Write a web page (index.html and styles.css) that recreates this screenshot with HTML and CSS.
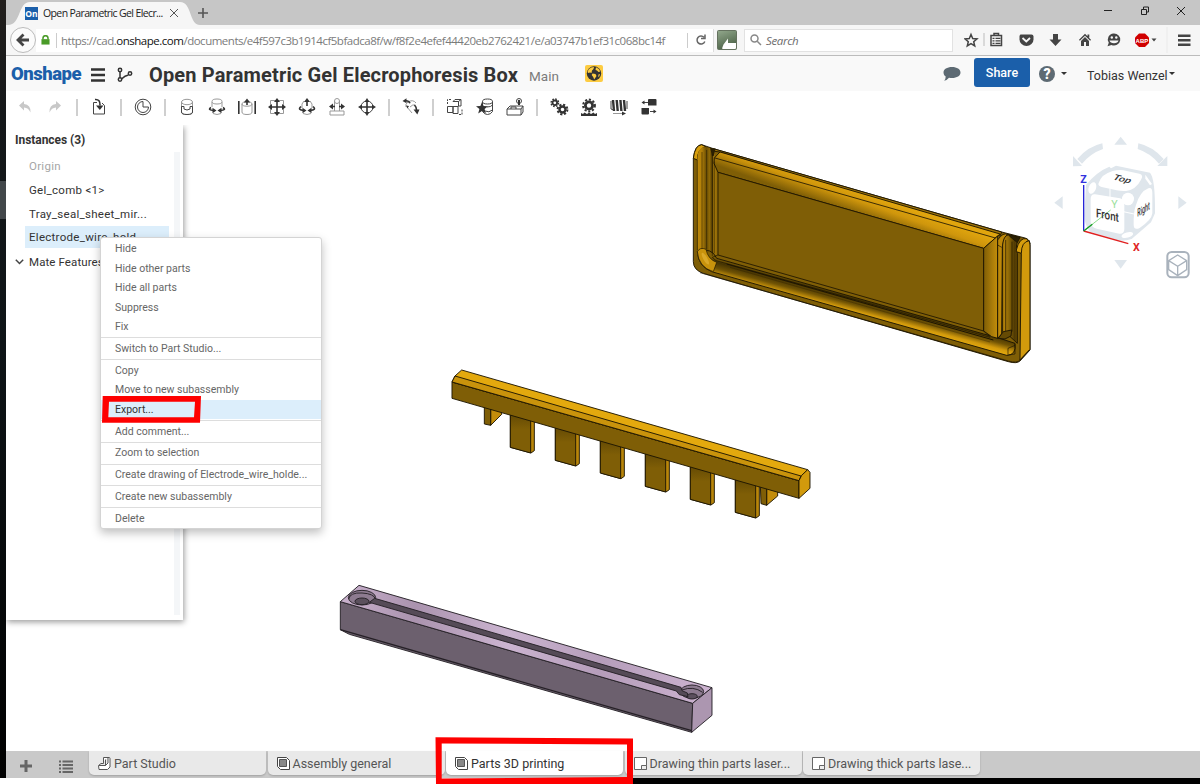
FILE: index.html
```html
<!DOCTYPE html>
<html lang="en">
<head>
<meta charset="utf-8">
<title>Open Parametric Gel Elecrophoresis Box</title>
<link rel="stylesheet" href="styles.css">
</head>
<body>
<div class="desktop">
<div class="wallpaper"><i></i></div>
<div class="window">
  <header class="titlebar">
    <div class="tab">
      <svg class="tab-shape" viewBox="0 0 192 25"><path d="M0 25C13 25 10 2 22 2H172C184 2 181 25 192 25Z" fill="#f6f6f6"/></svg>
      <span class="favicon">On</span><span class="tab-title">Open Parametric Gel Elecr...</span>
      <svg class="tab-close" viewBox="0 0 10 10"><path d="M1 1l8 8M9 1l-8 8" stroke="#555" fill="none"/></svg>
    </div>
    <svg class="new-tab" viewBox="0 0 10 10"><path d="M5 0v10M0 5h10" stroke="#555" stroke-width="1.600"/></svg>
    <svg class="win-buttons" viewBox="0 0 88 12"><g fill="none" stroke="#222"><path d="M4 5.500h8M77 2l8 8M85 2l-8 8" /><path d="M41.500 4.500h5v5h-5zM43.500 4v-2h5v5h-2"/></g></svg>
  </header>
  <div class="navbar">
    <div class="back"><svg viewBox="0 0 14 14"><path d="M7.500 1.500L2 7l5.500 5.500M2 7h11" fill="none" stroke="#444" stroke-width="2.800"/></svg></div>
    <div class="url">
      <svg class="lock" viewBox="0 0 10 12"><path d="M2.200 5V3.500a2.800 2.800 0 0 1 5.600 0V5" fill="none" stroke="#4a9b28" stroke-width="1.700"/><path d="M.5 4.500h9v6h-9z" fill="#4a9b28"/></svg>
      <i class="vline"></i>
      <span class="address">https://cad.<b>onshape.com</b>/documents/e4f597c3b1914cf5bfadca8f/w/f8f2e4efef44420eb2762421/e/a03747b1ef31c068bc14f</span>
      <i class="vline"></i>
      <svg class="reload" viewBox="0 0 12 12"><path d="M9 3.300A4 4 0 1 0 9.800 7.500M6 4.500h4v-4" fill="none" stroke="#666" stroke-width="1.500"/></svg>
    </div>
    <svg class="ext" viewBox="0 0 20 20"><defs><linearGradient id="eg" x2=".4" y2="1"><stop stop-color="#93a98d"/><stop offset="1" stop-color="#4e6449"/></linearGradient></defs><rect x=".5" y=".5" width="19" height="19" rx="1" fill="url(#eg)" stroke="#65725f"/><path d="M5 18.500L6.500 14.500 11 8.500V13h8v5a1 1 0 0 1-1 1H6z" fill="#fff"/></svg>
    <div class="search"><svg viewBox="0 0 12 12"><circle cx="4.500" cy="4.500" r="3.500"/><path d="M7.200 7.200L11 11"/></svg><span>Search</span></div>
    <svg class="nav-icons" viewBox="0 0 232 26"><g fill="#444" stroke="none">
      <path d="M7 7.500l1.700 4 4.300.4-3.300 2.800 1 4.200L7 16.600l-3.700 2.300 1-4.200L1 11.900l4.300-.4z" fill="none" stroke="#444" stroke-width="1.500"/>
      <path d="M19.500 6h1v13h-1z" fill="#bbb"/>
      <path d="M27 8.500h10.500v10H27zM30 6.500h4.500v2H30z" fill="none" stroke="#444" stroke-width="1.500"/><path d="M28.500 10.700h2v1.300h-2zm3 0h5v1.300h-5zm-3 2.500h2v1.300h-2zm3 0h5v1.300h-5zm-3 2.500h2V17h-2zm3 0h5V17h-5z"/>
      <path d="M56.500 7.500h11q2 0 2 2v3a7 6.500 0 0 1-14 0v-3q0-1.500 1-2z" /><path d="M58.500 11l3.800 3.500L66 11" fill="none" stroke="#f6f6f6" stroke-width="1.800"/>
      <path d="M89 7h5v5.500h3.500L91.500 19 85.500 12.500H89z"/>
      <path d="M115 12.800l6-6 6 6-.8 1-5.200-5-5.200 5zM117 14l4-4 4 4v5h-3v-4h-2v4h-3zM123.500 7.500h1.800v3h-1.800z"/>
      <path d="M149.500 6.500a6.300 6 0 1 1-2 11.500l-4 1.300 1.300-3.500a6 6 0 0 1 4.700-9.300"/><g fill="#f6f6f6"><circle cx="147.800" cy="10.500" r="1.200"/><circle cx="152.300" cy="10.500" r="1.200"/><path d="M145.500 13.500h9a4.600 3.500 0 0 1-9 0"/></g>
      <path d="M175 6.500h6l4 4v5.500l-4 4h-6l-4-4v-5.500z" fill="#d00000"/><text x="171.600" y="15.500" fill="#fff" class="abp">ABP</text><path d="M187.500 11.500h5l-2.500 3z"/><path d="M202.500 0h1v26h-1z" fill="#e9e9e9"/>
      <path d="M214 7.500h12.500V10H214zm0 4.500h12.500v2.500H214zm0 4.500h12.500V19H214z"/>
    </g></svg>
  </div>
  <div class="docbar">
    <span class="logo">Onshape</span>
    <svg class="burger" viewBox="0 0 14 14"><path d="M0 1.500h14M0 7h14M0 12.500h14" stroke="#333" stroke-width="2.400"/></svg>
    <svg class="branch" viewBox="0 0 16 16"><g fill="none" stroke="#333" stroke-width="1.500"><circle cx="3" cy="3" r="1.700"/><circle cx="3" cy="12.500" r="1.700"/><circle cx="13" cy="6.500" r="1.700"/><path d="M3 4.500v6.500M4.500 12Q8 8.500 11.500 8"/></g></svg>
    <h1>Open Parametric Gel Elecrophoresis Box</h1><span class="ws">Main</span>
    <svg class="globe" viewBox="0 0 18 17"><rect width="18" height="17" rx="2" fill="#fdcc42"/><circle cx="9" cy="8.500" r="7.200" fill="#333"/><path d="M4 4Q6 2 9 2L8.500 4 7 5.500 6.500 8 5 7.500 3 8 2.600 6.500zM11 2.300Q14.500 3.500 15.300 6.500L13.500 7 12 5.500 10.500 5zM7.500 8.500l3 .5 1 2-2.300 3.500-1-2.500-1.500-2zM13.500 9.500l1.500-.5-.8 2.500-1 .5z" fill="#fdcc42"/></svg>
    <svg class="bubble" viewBox="0 0 18 16"><path d="M9 1c5 0 8.500 2.300 8.500 5.500S14 12 9 12q-1.600 0-3-.3Q4 14.300 1.200 14.700 2.700 13 2.700 10.500C1.200 9.500.5 8 .5 6.500.5 3.300 4 1 9 1" fill="#5d6a73"/></svg>
    <button class="share">Share</button>
    <span class="help">?</span><i class="caret"></i>
    <span class="user">Tobias Wenzel</span><i class="caret"></i>
  </div>
  <div class="toolbar">
    <svg viewBox="0 0 18 18"><path d="M3 7.500L8 3v3q7 .5 6.500 8.500Q12.500 9.700 8 9.500v3z" fill="#c8c8c8"/></svg>
    <svg viewBox="0 0 18 18"><path d="M15 7.500L10 3v3q-7 .5-6.500 8.500Q5.500 9.700 10 9.500v3z" fill="#c8c8c8"/></svg>
    <i></i>
    <svg viewBox="0 0 18 18"><path d="M7 4.500H3.500v11.500h11V7.500L12 5" class="l"/><path d="M5 1.500q5.500-.5 5 6" class="b"/><path d="M6 7.500h7.500L9.800 12z"/></svg>
    <i></i>
    <svg viewBox="0 0 18 18"><circle cx="9" cy="9" r="7.800" class="l"/><path d="M9 3.500V9h5.500A5.500 5.500 0 1 1 9 3.500" class="l"/></svg>
    <i></i>
    <svg viewBox="0 0 18 18"><ellipse cx="9" cy="4" rx="5.500" ry="2.700" class="g"/><path d="M3.500 4v10q0 2.500 5.500 2.500t5.500-2.500V4" class="g"/><path d="M3.500 8.500H6v2.500q3 2 6 0V8.500h2.500V14q0 2.500-5.500 2.500T3.500 14z" class="l"/></svg>
    <svg viewBox="0 0 18 18"><ellipse cx="9" cy="3.500" rx="5" ry="2.500" class="g"/><path d="M4 4v5M14 4v5M5 15.500q4 2 8 0" class="g"/><path d="M3 9.500q-4 2.500 3 3M15 9.500q4 2.500-3 3" class="b"/><path d="M4.500 9.800l4 2.700-4 2.700zM13.500 9.800l-4 2.700 4 2.700z"/></svg>
    <svg viewBox="0 0 18 18"><path d="M4 6v8q0 2.500 5 2.500t5-2.500V6" class="g"/><ellipse cx="9" cy="6" rx="5" ry="2.200" class="g"/><path d="M.8 3v13M17.200 3v13M9 2v5" class="b"/><path d="M5.800 4.500L9 .5l3.200 4z"/></svg>
    <svg viewBox="0 0 18 18"><path d="M2.500 2.500h13v13h-13z" class="g"/><path d="M9 2v14M2 9h14" class="b"/><path d="M9 0l3 4H6zM9 18l3-4H6zM0 9l4-3v6zM18 9l-4-3v6z"/></svg>
    <svg viewBox="0 0 18 18"><path d="M4 10V6l2-3M14 10V6l-2-3M5 15.500q4 2 8 0" class="g"/><path d="M9 2v6M3 8.500q-4 3.500 3 4M15 8.500q4 3.500-3 4" class="b"/><path d="M6 4l3-4 3 4zM4.500 9.800l4 2.700-4 2.700zM13.500 9.800l-4 2.700 4 2.700z"/></svg>
    <svg viewBox="0 0 18 18"><circle cx="9" cy="3" r="2.500" class="g"/><path d="M6.500 3v10M11.500 3v10M2 13h14v4H2z" class="g"/><path d="M3 8.500h4M11 8.500h4" class="b"/><path d="M1 8.500l4-3v6zM17 8.500l-4-3v6z"/></svg>
    <svg viewBox="0 0 18 18"><circle cx="9" cy="9" r="6" class="l"/><path d="M9 2v14M2 9h14" class="b"/><path d="M9 0l2.500 4h-5zM9 18l2.500-4h-5zM0 9l4-2.500v5zM18 9l-4-2.500v5z"/></svg>
    <i></i>
    <svg viewBox="0 0 18 18"><path d="M4 9q-1-3 2-5 5-3 8 1M5 9l5 6M8 9q3-3 5-2" class="g"/><path d="M4 2.800q3 0 4 2.500M12.500 7q2 2 2 5" class="b"/><path d="M.5 3l4-2.800v5zM11.500 11.500h6l-2.200 5zM4 7.500l3 .5-1.500 2.500z"/></svg>
    <i></i>
    <svg viewBox="0 0 18 18"><path d="M1.500 8.500h5.500v6H1.500zM7 8.500h5v7H7zM7 3.500h5.500v5M12.500 3.500V8H15V1.500H9L7 3.500M12.500 3.500L15 1.500" class="l"/><path d="M1.500 6V1.500H6M13 16.500h3V11" class="l" stroke-dasharray="2 1"/></svg>
    <svg viewBox="0 0 18 18"><ellipse cx="11.500" cy="3.500" rx="5" ry="2.500" class="l"/><path d="M6.500 3.500v10q2 3 5 3t5-3v-10M11 9q4 0 5.500-2M9 13q4 2 7.500-1" class="l"/><path d="M6 4l1.600 4 4.400.3-3.400 2.800L9.800 15.500 6 13l-3.800 2.500 1.200-4.400L0 8.300 4.400 8z"/></svg>
    <svg viewBox="0 0 18 18"><path d="M1 11l3-3h13v6l-2 3H1zM1 11h14v6M15 11l2-3M5 11v-2h5v2" class="l"/><circle cx="13" cy="3" r="2.500" class="l"/><path d="M12 2h2v5h-2z"/></svg>
    <i></i>
    <svg viewBox="0 0 18 18"><circle cx="4.800" cy="4.800" r="2.300" fill="none" stroke="#333" stroke-width="1.800"/><circle cx="4.800" cy="4.800" r="3.700" class="teeth small"/><circle cx="12.500" cy="11.500" r="3" fill="none" stroke="#333" stroke-width="2.400"/><circle cx="12.500" cy="11.500" r="4.900" class="teeth"/></svg>
    <svg viewBox="0 0 18 18"><circle cx="9" cy="7.500" r="3.600" fill="none" stroke="#333" stroke-width="2.800"/><circle cx="9" cy="7.500" r="5.900" class="teeth"/><path d="M1 18v-3l2 1 1.500-1.500L7 16l2-1.500 2 1.500 2.500-1.500L15 16l2-1v3z"/></svg>
    <svg viewBox="0 0 18 18"><path d="M3 2l1 11M6.700 2l1 11M10.400 2l1 11M14 2l1 11" stroke="#333" stroke-width="2.400"/><path d="M1 3v8q2 2 4-1M17 3v8" class="l"/><path d="M3 15.500h11" class="g"/><path d="M12 13.500l4 2-4 2z"/></svg>
    <svg viewBox="0 0 18 18"><path d="M8 2q0-1 1-1h6.500q1 0 1 1v5.500H8zM1.500 10H9v5.500q0 1-1 1H2.500q-1 0-1-1z"/><path d="M8 4.500H3M10 13.500h5" class="l"/><path d="M1.500 4.500l3-2v4zM16.500 13.500l-3-2v4z"/></svg>
  </div>
  <main class="workspace">
    <svg class="scene" viewBox="6 125 1194 626">
      <defs>
        <linearGradient id="bev" gradientUnits="userSpaceOnUse" x1="540" y1="185" x2="517" y2="250"><stop stop-color="#e0a50e"/><stop offset=".4" stop-color="#cf960c"/><stop offset="1" stop-color="#7f5e06"/></linearGradient>
        <linearGradient id="chl" gradientUnits="userSpaceOnUse" x1="50" y1="0" x2="114" y2="0"><stop stop-color="#c08b0b"/><stop offset=".25" stop-color="#b07f09"/><stop offset=".45" stop-color="#6a4e04"/><stop offset=".6" stop-color="#8d6807"/><stop offset=".75" stop-color="#4d3803"/><stop offset=".8" stop-color="#a87a09"/><stop offset="1" stop-color="#8a6607"/></linearGradient>
        <linearGradient id="chb" gradientUnits="userSpaceOnUse" x1="540" y1="498" x2="525" y2="555"><stop stop-color="#7f5e06"/><stop offset=".2" stop-color="#453302"/><stop offset=".5" stop-color="#705304"/><stop offset=".8" stop-color="#d29a0c"/><stop offset="1" stop-color="#e3a90e"/></linearGradient>
        <linearGradient id="pil"><stop stop-color="#7f5e06"/><stop offset=".6" stop-color="#a97b09"/><stop offset="1" stop-color="#c48e0b"/></linearGradient>
        <linearGradient id="chr"><stop stop-color="#c08b0b"/><stop offset=".35" stop-color="#8d6807"/><stop offset=".7" stop-color="#4d3803"/><stop offset="1" stop-color="#8d6807"/></linearGradient>
        <linearGradient id="lil"><stop stop-color="#c9b1cd"/><stop offset=".2" stop-color="#aa93ae"/><stop offset=".45" stop-color="#cbb4d0"/><stop offset=".7" stop-color="#b59dba"/><stop offset="1" stop-color="#cdb4d1"/></linearGradient>
        <linearGradient id="leg" x2="0" y2="1"><stop stop-color="#634904"/><stop offset=".4" stop-color="#7f5e06"/></linearGradient>
      </defs>
      <g transform="translate(680 130) scale(.33333)" class="solid">
        <path d="M40 85Q45 45 65 44L100 56 965 306 1035 324Q1050 328 1050 345V660L1020 693Q1010 702 985 695L70 430Q40 420 40 395Z" fill="#7f5e06"/>
        <path d="M40 85Q45 45 65 44L78 51Q52 55 52 90Z" fill="#d79e0d"/>
        <path d="M52 90Q52 50 78 51L105 58 102 100 114 127V375L96 378 54 360Z" fill="url(#chl)" stroke="none"/>
        <path d="M52 365Q95 350 110 385L911 612 950 622 1005 640Q1010 675 980 676L95 425Q55 410 52 365Z" fill="url(#chb)"/>
        <path d="M52 365Q60 350 78 358 84 388 110 397L100 425Q56 412 52 365Z" fill="#c9930c" stroke-width="2"/>
        <ellipse cx="76" cy="386" rx="6" ry="20" fill="#eebf45" opacity=".5" stroke="none" transform="rotate(-30 76 386)"/>
        <path d="M100 56L965 306 960 318 120 66 104 64Z" fill="#a0760a"/>
        <path d="M120 66L960 312 911 355 114 127 102 100 103 84Z" fill="url(#bev)"/>
        <path d="M105 84L950 325" fill="none" stroke-width="2.500"/>
        <path d="M78 51L107 56 101 78 96 78 90 52Z" fill="#2a1f02" stroke="none"/>
        <path d="M52 90V360M66 66V356M80 60V358M97 72V378M103 95V370" fill="none" stroke-width="1.500"/>
        <path d="M114 127L911 355V603L114 375Z" fill="#7f5e06" stroke-width="2.500"/>
        <path d="M114 375L97 382 108 392 930 622 911 603" fill="none" stroke-width="2"/>
        <path d="M140 402L940 630" fill="none" stroke-width="3"/>
        <path d="M150 412L930 636" fill="none" stroke-width="1.500" opacity=".6"/>
        <path d="M911 355L953 318V625L935 620 911 603Z" fill="url(#pil)"/>
        <path d="M953 330Q970 305 983 314 968 330 967 350L965 612 953 625Z" fill="#bd880a"/>
        <path d="M968 345Q970 318 985 314L1020 322Q1003 340 1012 370V640L985 615 968 605Z" fill="url(#chr)"/>
        <path d="M985 314L1020 323 1012 338 990 320Z" stroke-width="2" fill="#2a1f02"/>
        <path d="M953 345L965 352M977 330V605M996 335V605" stroke-width="2" fill="none"/>
        <path d="M955 625L970 605 995 600 993 618 975 627Z" fill="#654a04"/>
        <path d="M1009 360Q1018 322 1040 326L1050 340 1024 370 1009 365Z" fill="#d79e0d"/>
        <path d="M1024 370Q1024 335 1048 332L1050 345V658L1020 690Z" fill="#d29a0c"/>
        <path d="M1005 642V672L980 676M984 672V655L1005 646M60 428L985 693Q1012 700 1020 690L1048 660" fill="none" stroke-width="2"/>
      </g>
      <g transform="translate(440 360) scale(.33333)" class="solid">
        <path d="M152 148H185V163L152 196Z" fill="#c28c0b"/><path d="M133 138H152V196L133 192Z" fill="#7f5e06"/>
        <path d="M980 385H1013V408L980 436Z" fill="#c28c0b"/><path d="M961 375H980V436L963 431Z" fill="#7f5e06"/>
        <g id="tooth"><path d="M211 160L283 182V272L273 279 211 262Z" fill="#b9860a"/><path d="M211 160L272 180V279L211 262Z" fill="url(#leg)"/></g>
        <use href="#tooth" x="135" y="39"/><use href="#tooth" x="270" y="77"/><use href="#tooth" x="405" y="117"/><use href="#tooth" x="540" y="156"/><use href="#tooth" x="675" y="195"/>
        <path d="M36 66L1077 362V415L36 115Z" fill="#7f5e06"/>
        <path d="M36 66L45 48 65 30 1103 329 1083 350 1077 362Z" fill="#e3a90e"/>
        <path d="M36 66L45 48 1083 348 1077 362Z" fill="#c9930c"/>
        <path d="M1077 362L1085 346 1103 329 1110 337V385L1077 415Z" fill="#d29a0c"/>
      </g>
      <g transform="translate(330 575) scale(.33333)" class="solid lilac">
        <path d="M31 80L1088 385 1085 472 58 178 31 164Z" fill="#6c606e"/>
        <path d="M31 80L87 31 1146 338 1088 385Z" fill="url(#lil)"/>
        <path d="M1088 385L1146 338V421L1085 472Z" fill="#ac96b0"/>
        <path d="M31 164L1085 467" fill="none" stroke-width="4"/>
        <ellipse cx="96" cy="68" rx="41" ry="22" fill="#8d7b90"/><path d="M56 72Q60 52 96 54T136 72" fill="none"/><ellipse cx="96" cy="79" rx="21" ry="10" fill="#5b505d"/>
        <ellipse cx="1086" cy="350" rx="35" ry="20" fill="#8d7b90"/><path d="M1056 345Q1090 332 1118 352" fill="none"/><ellipse cx="1086" cy="364" rx="16" ry="8" fill="#5b505d"/>
        <path d="M134 70L1053 337 1056 347 1072 354 1074 365 1048 359 1039 348 118 82Z" fill="#554b57"/>
      </g>
      <g transform="translate(1040 125) scale(.33333)">
        <g fill="#dfe6ec"><path d="M242 35l19 24h-38zM242 431l19-26h-38zM43 233l25-19v38zM440 233l-25-19v38zM99 93l27 30-27 1zM382 93v30h-30z"/>
        <path d="M187 55Q145 64 112 102l14 14Q152 85 189 72zM295 55Q337 64 371 102l-14 14Q330 84 293 72z"/>
        <path d="M228 122L330 143Q346 160 345 265L333 292 275 342Q250 350 230 345L150 320Q133 300 133 270L138 180Q170 140 208 125L213 130Z"/></g>
        <g fill="#fff"><path d="M176 174Q185 147 218 138 235 134 250 136L298 146Q312 150 303 164 288 194 258 198 245 199 230 196L185 186Q172 182 176 174"/><path d="M165 208L240 220Q253 222 253 240V312Q253 327 238 326L170 311Q152 307 152 290V222Q152 207 165 208"/><path d="M288 240Q300 200 325 190 337 185 337 205V265Q335 285 300 308 282 318 281 300 280 260 288 240"/><ellipse cx="264" cy="222" rx="18" ry="19"/><ellipse cx="157" cy="189" rx="11" ry="18" transform="rotate(20 157 189)"/><ellipse cx="262" cy="330" rx="18" ry="8" transform="rotate(-15 262 330)"/><path d="M316 149l20 28-6 4-14-20z"/></g>
        <path d="M210 190v32M250 260l32 7" stroke="#fff" stroke-width="3"/>
        <path d="M131 318V180" stroke="#2525d8" stroke-width="4"/><path d="M131 318L265 356" stroke="#e02020" stroke-width="4"/><path d="M131 318L212 255" stroke="#8edc8e" stroke-width="3"/><path d="M131 318L157 298" stroke="#139b22" stroke-width="4"/>
        <g class="cube-text"><text transform="translate(168 276) skewY(12) scale(.92 1.150)">Front</text><text transform="translate(292 276) skewY(-32) scale(.5 1.050)">Right</text><text transform="translate(216 163) rotate(13) skewX(-25) scale(1 .75)">Top</text></g>
        <g class="axis"><text x="121" y="173" fill="#3333e0">Z</text><text x="214" y="249" fill="#9ae09a" font-weight="normal">Y</text><text x="279" y="377" fill="#e02525">X</text></g>
        <g fill="none" stroke="#a9b2bc" stroke-width="4"><rect x="382" y="381" width="64" height="76" rx="13" stroke-width="6"/><path d="M413 390l27 17v27l-27 18-27-18v-27zM386 407l27 17 27-17M413 424v28"/></g>
      </g>
    </svg>
    <aside class="panel">
      <h2>Instances (3)</h2>
      <ul><li class="muted">Origin</li><li>Gel_comb &lt;1&gt;</li><li>Tray_seal_sheet_mir...</li><li class="sel">Electrode_wire_hold...</li></ul>
      <div class="mates"><svg viewBox="0 0 9 6"><path d="M.8.8l3.700 3.700L8.200.8" fill="none" stroke="#444" stroke-width="1.500"/></svg>Mate Features</div>
      <i class="scroll"></i>
    </aside>
    <ul class="menu">
      <li>Hide</li><li>Hide other parts</li><li>Hide all parts</li><li>Suppress</li><li>Fix</li><li class="sep"></li>
      <li>Switch to Part Studio...</li><li class="sep"></li>
      <li>Copy</li><li>Move to new subassembly</li><li class="hot">Export...</li><li class="sep"></li>
      <li>Add comment...</li><li class="sep"></li><li>Zoom to selection</li><li class="sep"></li>
      <li>Create drawing of Electrode_wire_holde...</li><li class="sep"></li><li>Create new subassembly</li><li class="sep"></li><li>Delete</li>
    </ul>
  </main>
  <footer class="tabs">
    <svg class="add" viewBox="0 0 14 14"><path d="M7 1v12M1 7h12" stroke="#666" stroke-width="3"/></svg>
    <svg class="list" viewBox="0 0 14 14"><path d="M0 1.500h2M0 5h2M0 8.500h2M0 12h2M3.500 1.500H14M3.500 5H14M3.500 8.500H14M3.500 12H14" stroke="#666" stroke-width="2"/></svg>
    <div class="etab"><svg viewBox="0 0 13 13"><path d="M5.500.5h5.500q1 0 1 1V10l-2.500 2.500H1l-.5-4L3 6.500h2.500zM1 8.500h6.500L10 6V.8M7.500 8.500v-6" fill="#fff" stroke="#555"/></svg><span>Part Studio</span></div>
    <div class="etab"><svg viewBox="0 0 13 13"><path d="M.5.500h9l3 3v9h-9l-3-3z" fill="#fff" stroke="#444"/><path d="M2.500 2.500h7v7h-7z" fill="#888" stroke="#555"/></svg><span>Assembly general</span></div>
    <div class="etab on"><svg viewBox="0 0 13 13"><path d="M.5.500h9l3 3v9h-9l-3-3z" fill="#fff" stroke="#444"/><path d="M2.500 2.500h7v7h-7z" fill="#888" stroke="#555"/></svg><span>Parts 3D printing</span></div>
    <div class="etab"><svg viewBox="0 0 13 13"><path d="M.5.500h12v12H.5z" fill="#fff" stroke="#666"/><path d="M7.500 8.500h5v4h-5z" fill="#eee" stroke="#666"/></svg><span>Drawing thin parts laser...</span></div>
    <div class="etab"><svg viewBox="0 0 13 13"><path d="M.5.500h12v12H.5z" fill="#fff" stroke="#666"/><path d="M7.500 8.500h5v4h-5z" fill="#eee" stroke="#666"/></svg><span>Drawing thick parts lase...</span></div>
  </footer>
</div>
<div class="edge"></div>
<svg class="marks" viewBox="0 0 1200 784"><g fill="#fe0000" fill-rule="evenodd"><path d="M102.700 396H201L200 422.700H102zM109 401.700L108.300 417.300H194L195 401.700z"/><path d="M435.500 737.200L633 738.500V784H436zM441.700 743.500V778.500L627 777V744.500z"/></g></svg>
</div>
</body>
</html>
```
FILE: styles.css
```css
* { box-sizing: border-box; }
body { margin: 0; font-family: Roboto, "Liberation Sans", sans-serif; color: #333; }
ul { list-style: none; margin: 0; padding: 0; }
svg { flex: none; display: block; }
.desktop { position: relative; width: 1200px; height: 784px; overflow: hidden; display: grid; grid-template: 778px 6px / 6px 1194px; background: #fff; }
.wallpaper { background: linear-gradient(#221f1d, #15181a 15%, #0e1417 45%, #000); padding-top: 181px; }
.wallpaper i { display: block; height: 38px; background: #42474a; }
.edge { grid-column: 2; margin-left: 627px; background: #000; }
.window { display: flex; flex-direction: column; min-width: 0; }
.marks { position: absolute; left: 0; top: 0; width: 1200px; height: 784px; pointer-events: none; }

.titlebar { height: 25px; background: #c6c6c6; display: flex; align-items: center; font-family: "Open Sans", sans-serif; }
.tab { position: relative; width: 192px; height: 25px; display: flex; align-items: center; margin-left: 2px; padding: 1px 0 0 17px; }
.tab-shape { position: absolute; left: 0; top: 0; width: 192px; height: 25px; }
.favicon { position: relative; width: 13px; height: 13px; background: #1b5faa; color: #fff; font-size: 8.500px; font-weight: 700; line-height: 13px; text-align: center; }
.tab-title { position: relative; font-size: 10.500px; color: #222; margin-left: 5px; width: 120px; white-space: nowrap; letter-spacing: -.62px; }
.tab-close { position: relative; width: 10px; height: 10px; margin-left: 6px; }
.new-tab { width: 10px; height: 10px; margin-left: -2px; }
.win-buttons { width: 88px; height: 12px; margin: -3px 12px 0 auto; overflow: visible; }

.navbar { height: 31px; background: #f6f6f6; border-bottom: 1px solid #bcbcbc; display: flex; align-items: center; font-family: "Open Sans", sans-serif; }
.back { width: 26px; height: 26px; border: 1px solid #bbb; border-radius: 50%; background: #fbfbfb; margin-left: 4px; display: grid; place-items: center; flex: none; }
.back svg { width: 14px; height: 14px; }
.url { height: 23px; width: 678px; background: #fff; display: flex; align-items: center; padding-left: 5px; flex: none; border-right: 1px solid #ddd; }
.lock { width: 9px; height: 11px; }
.vline { width: 1px; height: 15px; background: #ccc; margin: 0 4px 0 6px; flex: none; }
.address { font-size: 11.500px; color: #7b7b7b; width: 620px; white-space: nowrap; letter-spacing: -.49px; }
.address b { color: #111; font-weight: 400; }
.reload { width: 12px; height: 12px; margin-left: 3px; }
.ext { width: 20px; height: 20px; margin-left: 3px; }
.search { width: 209px; height: 23px; background: #fff; border: 1px solid #e2e2e2; margin-left: 7px; display: flex; align-items: center; padding-left: 5px; font-size: 11.500px; font-style: italic; color: #6d6d6d; gap: 4px; flex: none; letter-spacing: -.35px; }
.search svg { width: 12px; height: 12px; fill: none; stroke: #888; stroke-width: 1.500px; }
.nav-icons { width: 232px; height: 26px; margin-left: 11px; }
.abp { font: 700 6px "Liberation Sans", sans-serif; }

.docbar { height: 35px; background: #f9f9f9; display: flex; align-items: center; }
.logo { font-size: 18.500px; font-weight: 900; color: #1b5faa; margin-left: 5px; width: 80px; letter-spacing: -.5px; }
.burger { width: 14px; height: 14px; margin-top: 3px; }
.branch { width: 16px; height: 16px; margin: 3px 0 0 12px; }
.docbar h1 { font-size: 20px; font-weight: 700; margin: 2px 0 0 16px; width: 380px; white-space: nowrap; letter-spacing: .15px; }
.ws { font-size: 13.500px; color: #7b7b7b; width: 57px; padding-top: 5px; }
.globe { width: 18px; height: 17px; margin: -1px 0 0 -1px; }
.bubble { width: 18px; height: 16px; margin-left: 340px; }
.share { width: 56px; height: 29px; margin: -2px 0 0 13px; padding: 0; border: 0; border-radius: 3px; background: #1b5faa; color: #fff; font: 500 12.500px Roboto, sans-serif; }
.help { width: 16px; height: 16px; border-radius: 50%; background: #5d6a73; color: #fff; font-weight: 900; font-size: 14px; line-height: 16px; text-align: center; margin-left: 9px; }
.caret { border: 3px solid transparent; border-top-color: #333; border-bottom: 0; margin-left: 6px; }
.user { font-size: 12.500px; margin-left: 20px; width: 79px; white-space: nowrap; padding-top: 4px; }
.user + .caret { margin-left: 3px; }

.toolbar { height: 34px; display: flex; align-items: center; gap: 12px; padding: 0 0 2px 9.500px; background: #fff; }
.toolbar svg { width: 18px; height: 18px; fill: #333; overflow: visible; }
.toolbar i { width: 2px; height: 17px; background: #cfcfcf; }
.toolbar .l { fill: none; stroke: #444; stroke-width: 1; }
.toolbar .g { fill: none; stroke: #999; stroke-width: 1; }
.toolbar .b { fill: none; stroke: #333; stroke-width: 1.600; }
.toolbar .teeth { fill: none; stroke: #333; stroke-width: 2; stroke-dasharray: 2.100 1.750; }
.toolbar .small { stroke-width: 1.500; stroke-dasharray: 1.600 1.300; }

.workspace { position: relative; height: 626px; }
.scene { width: 1194px; height: 626px; }
.solid { stroke: #1d1502; stroke-width: 2.800px; stroke-linejoin: round; }
.lilac { stroke: #252026; }
.cube-text text { font: 500 32px Roboto, sans-serif; fill: #333; }
.axis { font: 700 32px Roboto, sans-serif; }
.panel { position: absolute; left: 0; top: 0; width: 177px; height: 495px; background: #fff; box-shadow: 1px 2px 6px rgba(0,0,0,.4); padding-top: 6px; font-size: 11.500px; clip-path: inset(0 -12px -12px 0); }
.panel h2 { font-size: 12px; line-height: 18px; margin: 0 0 6px 9px; letter-spacing: -.05px; }
.panel li { margin-left: 19px; width: 144px; height: 22px; line-height: 22px; padding-left: 4px; margin-bottom: 1.800px; white-space: nowrap; overflow: hidden; letter-spacing: .28px; }
.panel .muted { color: #a6a6a6; }
.panel .sel { background: #dceefb; }
.mates { display: flex; align-items: center; gap: 5px; padding-left: 9px; height: 23px; letter-spacing: .1px; }
.mates svg { width: 9px; height: 6px; }
.scroll { position: absolute; right: 3px; top: 27px; width: 6px; height: 463px; background: #f4f6f8; }
.menu { position: absolute; left: 94px; top: 112px; width: 222px; height: 292px; background: #fff; border: 1px solid #d4d4d4; border-radius: 3px; box-shadow: 0 4px 10px rgba(0,0,0,.25); padding-top: 1.300px; font-size: 10.500px; color: #666; }
.menu li { height: 19.500px; line-height: 20px; padding-left: 14px; white-space: nowrap; }
.menu .sep { height: 1px; background: #ddd; margin: .65px 0; }
.menu .hot { background: #dceefb; color: #333; }

.tabs { height: 27px; background: #c9c9c9; display: flex; align-items: flex-start; font-size: 12.500px; color: #555; }
.add { width: 14px; height: 14px; margin: 8px 0 0 13px; }
.list { width: 14px; height: 14px; margin: 9px 0 0 26px; }
.etab { width: 177px; height: 24px; background: #e9e9e9; border-radius: 0 0 5px 5px; margin-left: 1.500px; padding: 1px 0 0 9px; display: flex; align-items: center; gap: 3px; white-space: nowrap; box-shadow: 0 1px 2px rgba(0,0,0,.2); }
.etab svg { width: 13px; height: 13px; }
.list + .etab { margin-left: 16px; }
.etab.on { background: #fff; color: #333; }
```
